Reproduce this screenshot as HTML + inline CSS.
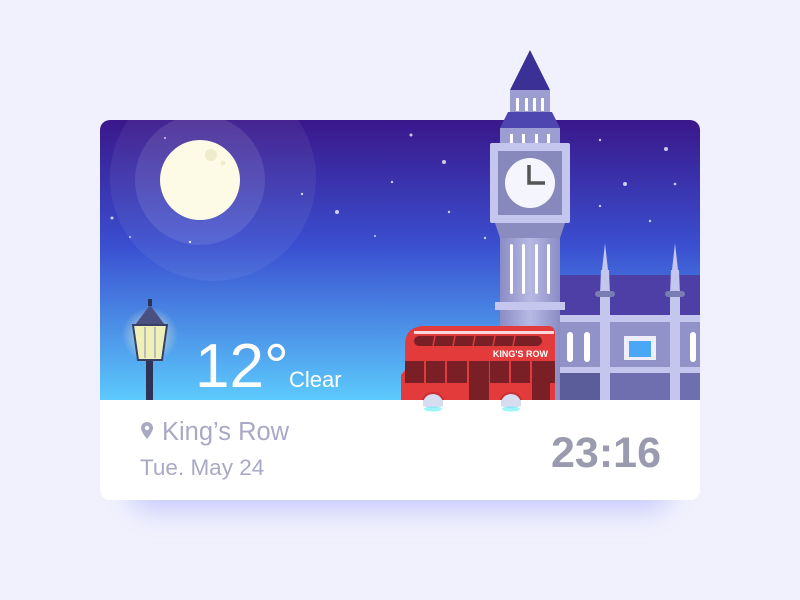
<!DOCTYPE html>
<html><head><meta charset="utf-8"><style>
html,body{margin:0;padding:0;width:800px;height:600px;overflow:hidden;background:#f1f1fd;font-family:"Liberation Sans",sans-serif}
</style></head><body>
<svg width="800" height="600" viewBox="0 0 800 600" xmlns="http://www.w3.org/2000/svg">
<defs>
<linearGradient id="sky" x1="0" y1="0" x2="0" y2="1">
<stop offset="0" stop-color="#3a178a"/><stop offset="0.45" stop-color="#3a4fd0"/><stop offset="1" stop-color="#5ccafc"/></linearGradient>
<linearGradient id="tw" x1="0" y1="0" x2="1" y2="0">
<stop offset="0" stop-color="#8a8cc4"/><stop offset="0.5" stop-color="#b7b9e4"/><stop offset="1" stop-color="#8a8cc4"/></linearGradient>
<clipPath id="cc"><rect x="100" y="120" width="600" height="380" rx="10"/></clipPath>
<filter id="sh" x="-20%" y="-20%" width="140%" height="160%"><feGaussianBlur stdDeviation="14"/></filter>
<radialGradient id="lg"><stop offset="0" stop-color="#fffbd0" stop-opacity=".8"/><stop offset="1" stop-color="#fffbd0" stop-opacity="0"/></radialGradient>
</defs>
<rect x="130" y="170" width="540" height="340" rx="20" fill="#c4c8fb" filter="url(#sh)"/>
<g clip-path="url(#cc)">
<rect x="100" y="120" width="600" height="380" fill="#fff"/>
<rect x="100" y="120" width="600" height="280" fill="url(#sky)"/>
<circle cx="213" cy="178" r="103" fill="#fff" opacity=".06"/>
<circle cx="200" cy="180" r="65" fill="#fff" opacity=".1"/>
<circle cx="200" cy="180" r="40" fill="#fdfbe6"/>
<circle cx="211" cy="155" r="6" fill="#efeccc"/><circle cx="223" cy="163" r="2.5" fill="#efeccc"/>
<g fill="#fff" opacity=".75">
<circle cx="411" cy="135" r="1.5"/><circle cx="444" cy="162" r="2"/><circle cx="392" cy="182" r="1.2"/><circle cx="449" cy="212" r="1.2"/><circle cx="485" cy="238" r="1.2"/><circle cx="337" cy="212" r="2"/><circle cx="302" cy="194" r="1.2"/><circle cx="375" cy="236" r="1"/><circle cx="112" cy="218" r="1.5"/><circle cx="190" cy="242" r="1.2"/><circle cx="130" cy="237" r="1"/><circle cx="600" cy="140" r="1.2"/><circle cx="666" cy="149" r="2"/><circle cx="625" cy="184" r="2"/><circle cx="675" cy="184" r="1.3"/><circle cx="600" cy="206" r="1.2"/><circle cx="650" cy="221" r="1.2"/><circle cx="165" cy="138" r="1"/></g>
<!-- building -->
<rect x="560" y="275" width="140" height="125" fill="#6f6fb0"/>
<path d="M560 275 L700 275 L700 315 L560 315Z" fill="#4d3fa6"/>
<rect x="560" y="315" width="140" height="7" fill="#c4c6ee"/>
<rect x="560" y="367" width="140" height="6" fill="#c4c6ee"/>
<rect x="560" y="322" width="140" height="45" fill="#9193c8"/>
<rect x="600" y="290" width="10" height="110" fill="#c4c6ee"/>
<rect x="670" y="290" width="10" height="110" fill="#c4c6ee"/>
<path d="M605 243 L608 270 L602 270Z M675 243 L678 270 L672 270Z" fill="#c4c6ee"/>
<path d="M601 270 L609 270 L610 295 L600 295Z M671 270 L679 270 L680 295 L670 295Z" fill="#c4c6ee"/>
<rect x="595" y="291" width="20" height="6" rx="3" fill="#7a7cb4"/><rect x="665" y="291" width="20" height="6" rx="3" fill="#7a7cb4"/>
<g fill="#fff"><rect x="567" y="332" width="6" height="30" rx="3"/><rect x="584" y="332" width="6" height="30" rx="3"/><rect x="690" y="332" width="6" height="30" rx="3"/></g>
<rect x="624" y="336" width="32" height="24" fill="#eef" /><rect x="629" y="341" width="22" height="16" fill="#4aa7f5"/>
<rect x="560" y="373" width="40" height="27" fill="#5b5c9a"/>
<!-- shaft -->
<rect x="500" y="238" width="60" height="162" fill="url(#tw)"/>
<g fill="#fff"><rect x="510" y="244" width="3" height="50" rx="1.5"/><rect x="522" y="244" width="3" height="50" rx="1.5"/><rect x="535" y="244" width="3" height="50" rx="1.5"/><rect x="547" y="244" width="3" height="50" rx="1.5"/></g>
<rect x="495" y="302" width="70" height="8" fill="#c4c6ee"/>
<!-- bus -->
<path d="M405 345 Q405 326 425 326 L548 326 Q555 326 555 334 L555 404 L401 404 L401 375 L405 370Z" fill="#e33a3c"/>
<rect x="414" y="331" width="140" height="3" fill="#fff" opacity=".8"/>
<rect x="414" y="336" width="128" height="10" rx="5" fill="#7a1f25"/>
<g stroke="#e33a3c" stroke-width="1.5"><line x1="435" y1="336" x2="433" y2="346"/><line x1="455" y1="336" x2="453" y2="346"/><line x1="475" y1="336" x2="473" y2="346"/><line x1="495" y1="336" x2="493" y2="346"/><line x1="515" y1="336" x2="513" y2="346"/></g>
<rect x="405" y="361" width="150" height="22" fill="#7a1f25"/>
<g stroke="#e33a3c" stroke-width="2"><line x1="425" y1="361" x2="425" y2="383"/><line x1="446" y1="361" x2="446" y2="383"/><line x1="468" y1="361" x2="468" y2="404"/><line x1="489" y1="361" x2="489" y2="383"/><line x1="510" y1="361" x2="510" y2="383"/><line x1="531" y1="361" x2="531" y2="404"/></g>
<rect x="469" y="361" width="20" height="43" fill="#7a1f25"/><rect x="532" y="361" width="18" height="43" fill="#7a1f25"/>
<text x="548" y="357" font-size="9" font-weight="bold" fill="#fff" text-anchor="end">KING'S ROW</text>
<circle cx="433" cy="404" r="12" fill="#c93035"/><circle cx="433" cy="404" r="10" fill="#d6ddf0"/>
<circle cx="511" cy="404" r="12" fill="#c93035"/><circle cx="511" cy="404" r="10" fill="#d6ddf0"/>
<rect x="400" y="400" width="300" height="100" fill="#fff"/>
<path d="M423 400 h20 v6 q-10 4 -20 0z M501 400 h20 v6 q-10 4 -20 0z" fill="#d6ddf0"/>
<ellipse cx="433" cy="409" rx="9" ry="2.5" fill="#5cf0f8" opacity=".6"/><ellipse cx="511" cy="409" rx="9" ry="2.5" fill="#5cf0f8" opacity=".6"/>
<!-- lamp -->
<circle cx="150" cy="335" r="28" fill="url(#lg)"/>
<rect x="146" y="360" width="7" height="40" fill="#2e3355"/>
<path d="M150 305 L165 325 L135 325Z" fill="#4a5080"/>
<rect x="148" y="299" width="4" height="7" fill="#2e3355"/>
<path d="M133 325 L167 325 L162 360 L138 360Z" fill="#eef0b8" stroke="#3a3f66" stroke-width="2"/>
<line x1="145" y1="327" x2="145" y2="358" stroke="#aab" stroke-width="1.5"/><line x1="155" y1="327" x2="155" y2="358" stroke="#aab" stroke-width="1.5"/>
<text x="195" y="387" font-size="62" fill="#fff">12°</text>
<text x="289" y="387" font-size="22" fill="#fff">Clear</text>
<path d="M147 422 a6 6 0 0 1 6 6 c0 4 -6 11 -6 11 c0 0 -6 -7 -6 -11 a6 6 0 0 1 6 -6z" fill="#a9a9c6"/><circle cx="147" cy="428" r="2.2" fill="#fff"/>
<text x="162" y="440" font-size="25.5" fill="#a9a9c6">King’s Row</text>
<text x="140" y="475" font-size="22.5" fill="#a9a9c6">Tue. May 24</text>
<text x="661" y="467" font-size="43" font-weight="bold" fill="#9b9bb0" text-anchor="end">23:16</text>
</g>
<!-- tower upper -->
<path d="M530 50 L550 90 L510 90Z" fill="#3a3096"/>
<rect x="510" y="90" width="40" height="22" fill="#9c9ed2"/>
<g fill="#fff"><rect x="516" y="98" width="3" height="13"/><rect x="525" y="98" width="3" height="13"/><rect x="533" y="98" width="3" height="13"/><rect x="541" y="98" width="3" height="13"/></g>
<path d="M508 112 L552 112 L560 128 L500 128Z" fill="#4d45b0"/>
<rect x="500" y="128" width="60" height="15" fill="#9c9ed2"/>
<g fill="#fff"><rect x="510" y="134" width="3" height="9"/><rect x="522" y="134" width="3" height="9"/><rect x="535" y="134" width="3" height="9"/><rect x="547" y="134" width="3" height="9"/></g>
<rect x="490" y="143" width="80" height="80" rx="2" fill="#c4c6ee"/>
<rect x="498" y="151" width="64" height="64" fill="#8788bb"/>
<circle cx="530" cy="183" r="25" fill="#f5f5fd"/>
<path d="M529 165 L529 183 L545 183" stroke="#555" stroke-width="3.5" fill="none"/>
<path d="M495 223 L565 223 L560 238 L500 238Z" fill="#8a8cc0"/>
</svg>
</body></html>
